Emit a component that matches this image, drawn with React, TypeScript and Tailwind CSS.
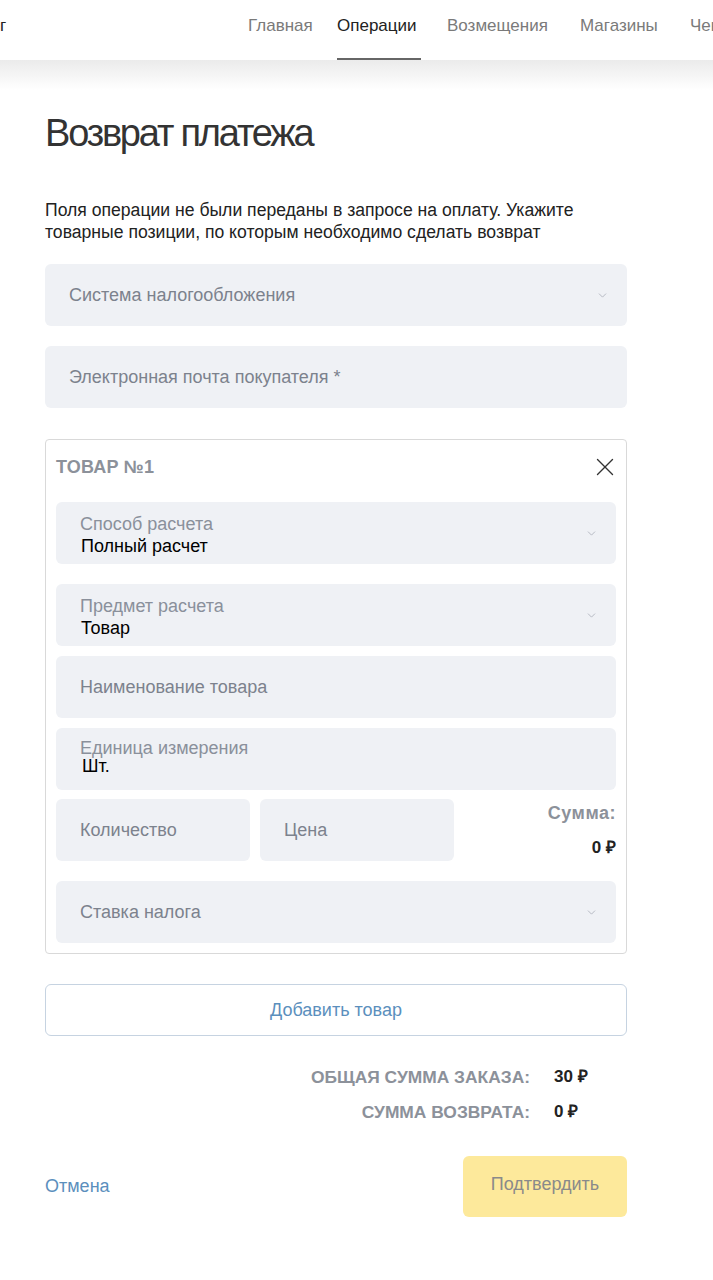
import { X, ChevronDown } from "lucide-react";

const font = { fontFamily: '"Liberation Sans", Arial, sans-serif' };

const Chevron = () => <ChevronDown className="w-[13px] h-[13px] text-[#a9aeb7]" strokeWidth={1.5} />;

const SelectField = ({ label, value }: { label: string; value?: string }) => (
	<div className="h-[62px] rounded-md bg-[#eff1f5] flex items-center justify-between pl-[24px] pr-[18px]">
		{value ? (
			<div className="flex flex-col pt-[3px]">
				<span className="text-[18px] leading-[22px] text-[#8a909b]">{label}</span>
				<span className="text-[18px] leading-[22px] text-black pl-[1px]">{value}</span>
			</div>
		) : (
			<span className="text-[18px] text-[#7c828d]">{label}</span>
		)}
		<Chevron />
	</div>
);

const InputField = ({ label, className = "" }: { label: string; className?: string }) => (
	<div className={"h-[62px] rounded-md bg-[#eff1f5] flex items-center pl-[24px] " + className}>
		<span className="text-[18px] text-[#7c828d]">{label}</span>
	</div>
);

const navItems = [
	{ name: "Главная", w: "w-[63px]" },
	{ name: "Операции", w: "w-[84px]" },
	{ name: "Возмещения", w: "w-[107px]" },
	{ name: "Магазины", w: "w-[84px]" },
	{ name: "Чеки", w: "w-[60px]" },
];

export default function App() {
	return (
		<div className="min-h-[1280px] bg-white overflow-hidden text-[#222]" style={font}>
			<header className="relative h-[60px] bg-white flex items-stretch">
				<span className="absolute left-0 top-[13px] text-[17px] text-[#222]">г</span>
				<nav className="flex ml-[248px] gap-[26px] whitespace-nowrap">
					{navItems.map((n) => (
						<div
							key={n.name}
							className={
								"shrink-0 flex items-start pt-[13px] text-[17px] border-b-2 " +
								n.w +
								(n.name === "Операции" ? " text-[#222] border-[#666]" : " text-[#7a7a7a] border-transparent")
							}
						>
							{n.name}
						</div>
					))}
				</nav>
			</header>
			<div className="h-[30px] bg-gradient-to-b from-[#ebebeb] to-white" />

			<main className="ml-[45px] w-[582px] pt-[20px]">
				<h1 className="text-[38px] leading-[46px] tracking-[-2.2px] text-[#333]">Возврат платежа</h1>
				<p className="mt-[43px] text-[17.6px] leading-[22px] text-[#222]">
					Поля операции не были переданы в запросе на оплату. Укажите товарные позиции, по которым необходимо сделать возврат
				</p>

				<div className="mt-[21px] flex flex-col gap-[20px]">
					<SelectField label="Система налогообложения" />
					<InputField label="Электронная почта покупателя *" />
				</div>

				<section className="mt-[31px] border border-[#d9d9d9] rounded-[4px] px-[10px] pb-[10px]">
					<div className="h-[54px] flex items-center justify-between">
						<span className="text-[18px] font-bold text-[#8c919a] tracking-[0.2px]">ТОВАР №1</span>
						<X className="w-[30px] h-[30px] text-[#333] -mr-[4px]" strokeWidth={1.1} />
					</div>
					<div className="mt-[8px] flex flex-col">
						<SelectField label="Способ расчета" value="Полный расчет" />
						<div className="mt-[20px]">
							<SelectField label="Предмет расчета" value="Товар" />
						</div>
						<InputField label="Наименование товара" className="mt-[10px]" />
						<div className="mt-[10px] h-[62px] rounded-md bg-[#eff1f5] flex flex-col pl-[24px] pt-[9px]">
							<span className="text-[18px] leading-[22px] text-[#8a909b]">Единица измерения</span>
							<span className="text-[18px] leading-[14px] text-black pl-[2px]">Шт.</span>
						</div>
						<div className="mt-[9px] flex gap-[10px]">
							<InputField label="Количество" className="w-[194px]" />
							<InputField label="Цена" className="w-[194px]" />
							<div className="flex-1 flex flex-col items-end pt-[1px]">
								<span className="text-[18px] font-bold text-[#8c919a] tracking-[0.5px]">Сумма:</span>
								<span className="mt-[8px] text-[17px] font-bold text-[#222]">0 ₽</span>
							</div>
						</div>
						<div className="mt-[20px]">
							<SelectField label="Ставка налога" />
						</div>
					</div>
				</section>

				<button className="mt-[30px] w-full h-[52px] rounded-md border border-[#c6d3e1] text-[18px] text-[#5b8fbd] bg-white">
					Добавить товар
				</button>

				<div className="mt-[31px] flex flex-col items-end pr-[36px] gap-[15px]">
					<div className="flex items-center leading-[20px]">
						<span className="text-[17.4px] font-bold text-[#8c919a]">ОБЩАЯ СУММА ЗАКАЗА:</span>
						<span className="w-[61px] pl-[24px] text-[17px] font-bold text-[#222] whitespace-nowrap">30 ₽</span>
					</div>
					<div className="flex items-center leading-[20px]">
						<span className="text-[17.4px] font-bold text-[#8c919a]">СУММА ВОЗВРАТА:</span>
						<span className="w-[61px] pl-[24px] text-[17px] font-bold text-[#222] whitespace-nowrap">0 ₽</span>
					</div>
				</div>

				<div className="mt-[34px] flex items-center justify-between">
					<span className="text-[18px] text-[#5b8fbd]">Отмена</span>
					<button className="w-[164px] h-[61px] rounded-md bg-[#fde99b] text-[18px] text-[#8a8a8a] pb-[4px]">Подтвердить</button>
				</div>
			</main>
		</div>
	);
}
